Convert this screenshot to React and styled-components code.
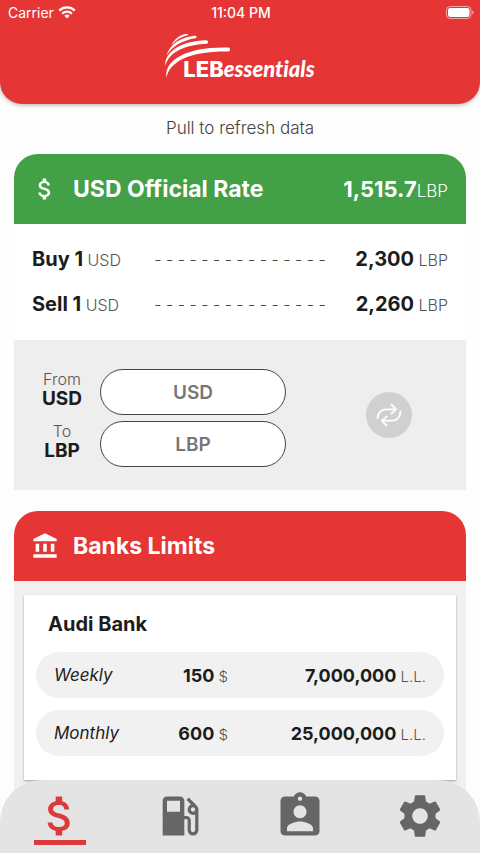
import React from "react";
import styled, { createGlobalStyle } from "styled-components";
import {
  MdAttachMoney,
  MdAccountBalance,
  MdLocalGasStation,
  MdAssignmentInd,
  MdSettings,
} from "react-icons/md";

const rates = [
  { action: "Buy 1", value: "2,300" },
  { action: "Sell 1", value: "2,260" },
];

const limits = [
  { period: "Weekly", usd: "150", lbp: "7,000,000" },
  { period: "Monthly", usd: "600", lbp: "25,000,000" },
];

const Wifi = () => (
  <svg width="18" height="13" viewBox="0 0 18 13" fill="none" stroke="#fff">
    <path d="M1.2 4.6a11.2 11.2 0 0 1 15.6 0" strokeWidth="2.3" />
    <path d="M4.1 7.7a7 7 0 0 1 9.8 0" strokeWidth="2.2" />
    <path d="M9 12.6 6.3 9.8a3.9 3.9 0 0 1 5.4 0z" fill="#fff" stroke="none" />
  </svg>
);

const Battery = () => (
  <svg width="28" height="13" viewBox="0 0 28 13" fill="none">
    <rect x="0.5" y="0.5" width="24.5" height="12" rx="3.6" stroke="#fff" strokeOpacity="0.55" />
    <rect x="2" y="2" width="21.5" height="9" rx="2.2" fill="#fff" />
    <path d="M26.3 4.4v4.2c.9-.4 1.4-1.2 1.4-2.1s-.5-1.7-1.4-2.1z" fill="#fff" fillOpacity="0.6" />
  </svg>
);

const Swoosh = () => (
  <svg width="68" height="46" viewBox="0 0 68 46" fill="#fff">
    <path d="M1.5 43.5C-1 28 18 12.5 63 13.5a2 2 0 0 1 .2 4C28 17 5 26 1.5 43.5z" />
    <path d="M.2 32C-.5 18 16 7 41 6.3a1.7 1.7 0 0 1 .5 3.5C20 11 4 18 .2 32z" />
    <path d="M1.5 21.5C5 10 16 3 30 1.7a1.2 1.2 0 0 1 .5 2.5C18 6 7 12 1.5 21.5z" />
    <path d="M6.5 11C10 4.5 15 .8 22-.3a.7.7 0 0 1 .4 1.5C16 2.8 11 6 6.5 11z" />
  </svg>
);

const Swap = () => (
  <svg width="26" height="26" viewBox="0 0 26 26" fill="none" stroke="#fff" strokeWidth="1.8">
    <path d="M1.5 17C1.5 11 5 7.3 10 7.3h9.5" />
    <path d="M14.8 1.8l5.2 5.5-5.2 4.9" />
    <path d="M24.5 9c0 6-3.5 9.7-8.5 9.7H6.5" />
    <path d="M11.2 24.2L6 18.7l5.2-4.9" />
  </svg>
);

const App = () => {
  return (
    <>
      <GlobalStyle />
      <Screen>
        <Header>
          <StatusBar>
            <Carrier>
              Carrier <Wifi />
            </Carrier>
            <Time>11:04 PM</Time>
            <Battery />
          </StatusBar>
          <Logo>
            <Swoosh />
            <Brand>
              <b>LEB</b>
              <i>essentials</i>
            </Brand>
          </Logo>
        </Header>

        <Main>
          <Hint>Pull to refresh data</Hint>

          <Card>
            <CardHeader $color="#42a046">
              <MdAttachMoney size={28} />
              <Title>USD Official Rate</Title>
              <Official>
                1,515.7<small>LBP</small>
              </Official>
            </CardHeader>
            <Rates>
              {rates.map((rate) => (
                <Rate key={rate.action}>
                  <span>
                    <Strong>{rate.action}</Strong> <Unit>USD</Unit>
                  </span>
                  <Dashes>- - - - - - - - - - - - - - -</Dashes>
                  <Amount>
                    <Strong>{rate.value}</Strong> <Unit>LBP</Unit>
                  </Amount>
                </Rate>
              ))}
            </Rates>
            <Converter>
              <Fields>
                <Label htmlFor="from">
                  From <b>USD</b>
                </Label>
                <Input id="from" placeholder="USD" />
                <Label htmlFor="to">
                  To <b>LBP</b>
                </Label>
                <Input id="to" placeholder="LBP" />
              </Fields>
              <SwapButton aria-label="Swap currencies">
                <Swap />
              </SwapButton>
            </Converter>
          </Card>

          <Card>
            <CardHeader $color="#e53535">
              <MdAccountBalance size={28} />
              <Title>Banks Limits</Title>
            </CardHeader>
            <Banks>
              <Bank>
                <BankName>Audi Bank</BankName>
                {limits.map((limit) => (
                  <Limit key={limit.period}>
                    <Period>{limit.period}</Period>
                    <Cell>
                      <b>{limit.usd}</b> $
                    </Cell>
                    <Cell>
                      <b>{limit.lbp}</b> L.L.
                    </Cell>
                  </Limit>
                ))}
              </Bank>
            </Banks>
          </Card>
        </Main>

        <Nav>
          <Tab href="#rates" aria-label="Rates" $active>
            <MdAttachMoney size={52} />
          </Tab>
          <Tab href="#fuel" aria-label="Fuel">
            <MdLocalGasStation size={52} />
          </Tab>
          <Tab href="#contacts" aria-label="Contacts">
            <MdAssignmentInd size={52} />
          </Tab>
          <Tab href="#settings" aria-label="Settings">
            <MdSettings size={52} />
          </Tab>
        </Nav>
      </Screen>
    </>
  );
};

const GlobalStyle = createGlobalStyle`
  * {
    box-sizing: border-box;
  }
  body {
    margin: 0;
    background: #fdfdfd;
    color: #1c1c1c;
    font-family: Inter, "Open Sans", sans-serif;
  }
`;

const Screen = styled.div`
  min-height: 100vh;
`;

const Header = styled.header`
  height: 104px;
  background: #e53535;
  color: #fff;
  border-radius: 0 0 22px 22px;
  box-shadow: 0 1px 4px rgba(0, 0, 0, 0.3);
`;

const StatusBar = styled.div`
  display: grid;
  grid-template-columns: 1fr auto 1fr;
  align-items: center;
  height: 24px;
  padding: 0 6px 0 8px;
  font-size: 14px;

  > svg {
    justify-self: end;
  }
`;

const Carrier = styled.span`
  display: flex;
  align-items: center;
  gap: 4px;
`;

const Time = styled.span`
  font-weight: 500;
`;

const Logo = styled.div`
  display: grid;
  justify-content: center;
  margin-top: 10px;

  > * {
    grid-area: 1 / 1;
  }
`;

const Brand = styled.div`
  padding: 23px 0 0 18px;
  line-height: 24px;

  b {
    font: 800 22px/24px Inter, sans-serif;
  }
  i {
    font: italic 900 22px/24px Lato, sans-serif;
    font-variant-ligatures: none;
  }
`;

const Main = styled.main`
  padding: 0 14px;
`;

const Hint = styled.p`
  margin: 0;
  padding: 14px 0 16px;
  text-align: center;
  font-size: 17px;
  font-weight: 300;
  line-height: 20px;
  color: #444;
`;

const Card = styled.section`
  margin-bottom: 21px;

  &:last-child {
    margin-bottom: 0;
  }
`;

const CardHeader = styled.div`
  display: flex;
  align-items: center;
  height: 70px;
  padding: 0 18px 0 17px;
  border-radius: 24px 24px 0 0;
  background: ${(props) => props.$color};
  color: #fff;
`;

const Title = styled.h2`
  flex: 1;
  margin: 0 0 0 14px;
  font-size: 23px;
  font-weight: 700;
`;

const Official = styled.span`
  font-size: 22px;
  font-weight: 700;

  small {
    font-size: 17px;
    font-weight: 300;
  }
`;

const Rates = styled.div`
  padding: 12px 18px 14px;
  background: #fff;
`;

const Rate = styled.div`
  display: grid;
  grid-template-columns: 1fr 2fr 1fr;
  align-items: center;
  height: 45px;
  white-space: nowrap;
`;

const Strong = styled.b`
  font-size: 20px;
`;

const Unit = styled.span`
  font-size: 16px;
  font-weight: 300;
  color: #555;
`;

const Dashes = styled.span`
  text-align: center;
  font-size: 16px;
  font-weight: 300;
  color: #444;
`;

const Amount = styled.span`
  text-align: right;
`;

const Converter = styled.div`
  display: flex;
  align-items: center;
  justify-content: space-between;
  padding: 29px 54px 23px 20px;
  background: #eee;
`;

const Fields = styled.div`
  display: grid;
  grid-template-columns: 56px 186px;
  gap: 6px 10px;
`;

const Label = styled.label`
  display: flex;
  flex-direction: column;
  align-items: center;
  justify-content: center;
  padding-bottom: 6px;
  font-size: 16px;
  font-weight: 300;
  line-height: 20px;
  color: #555;

  b {
    font-size: 19px;
    font-weight: 700;
    color: #1c1c1c;
  }
`;

const Input = styled.input`
  width: 100%;
  height: 46px;
  border: 1px solid #444;
  border-radius: 23px;
  background: #fff;
  text-align: center;
  font: 600 19px Inter, sans-serif;

  &::placeholder {
    color: #777;
  }
`;

const SwapButton = styled.button`
  display: flex;
  align-items: center;
  justify-content: center;
  width: 46px;
  height: 46px;
  margin-bottom: 6px;
  padding: 0;
  border: 0;
  border-radius: 50%;
  background: #d0d0d0;
`;

const Banks = styled.div`
  padding: 14px 10px 73px;
  background: #f0f0f0;
`;

const Bank = styled.article`
  padding: 16px 12px 24px;
  background: #fff;
  box-shadow: 0 1px 2px rgba(0, 0, 0, 0.35);
`;

const BankName = styled.h3`
  margin: 0 0 14px 12px;
  font-size: 20px;
  font-weight: 700;
  line-height: 27px;
`;

const Limit = styled.div`
  display: grid;
  grid-template-columns: 80px 94px 1fr;
  align-items: center;
  height: 46px;
  padding: 0 18px;
  border-radius: 23px;
  background: #f1f1f1;

  & + & {
    margin-top: 12px;
  }
`;

const Period = styled.i`
  font-size: 17px;
`;

const Cell = styled.span`
  text-align: right;
  font-size: 15px;
  font-weight: 300;
  color: #555;

  b {
    font-size: 18px;
    font-weight: 700;
    color: #1c1c1c;
  }
`;

const Nav = styled.nav`
  position: fixed;
  left: 0;
  right: 0;
  bottom: 0;
  display: flex;
  height: 73px;
  border-radius: 42px 42px 0 0;
  background: #e4e4e4;
`;

const Tab = styled.a`
  flex: 1;
  display: flex;
  flex-direction: column;
  align-items: center;
  padding-top: 10px;
  color: ${(props) => (props.$active ? "#dc3a3a" : "#666")};

  &::after {
    content: "";
    width: 52px;
    height: 5px;
    margin-top: -2px;
    background: ${(props) => (props.$active ? "#dc3a3a" : "transparent")};
  }
`;

export default App;
